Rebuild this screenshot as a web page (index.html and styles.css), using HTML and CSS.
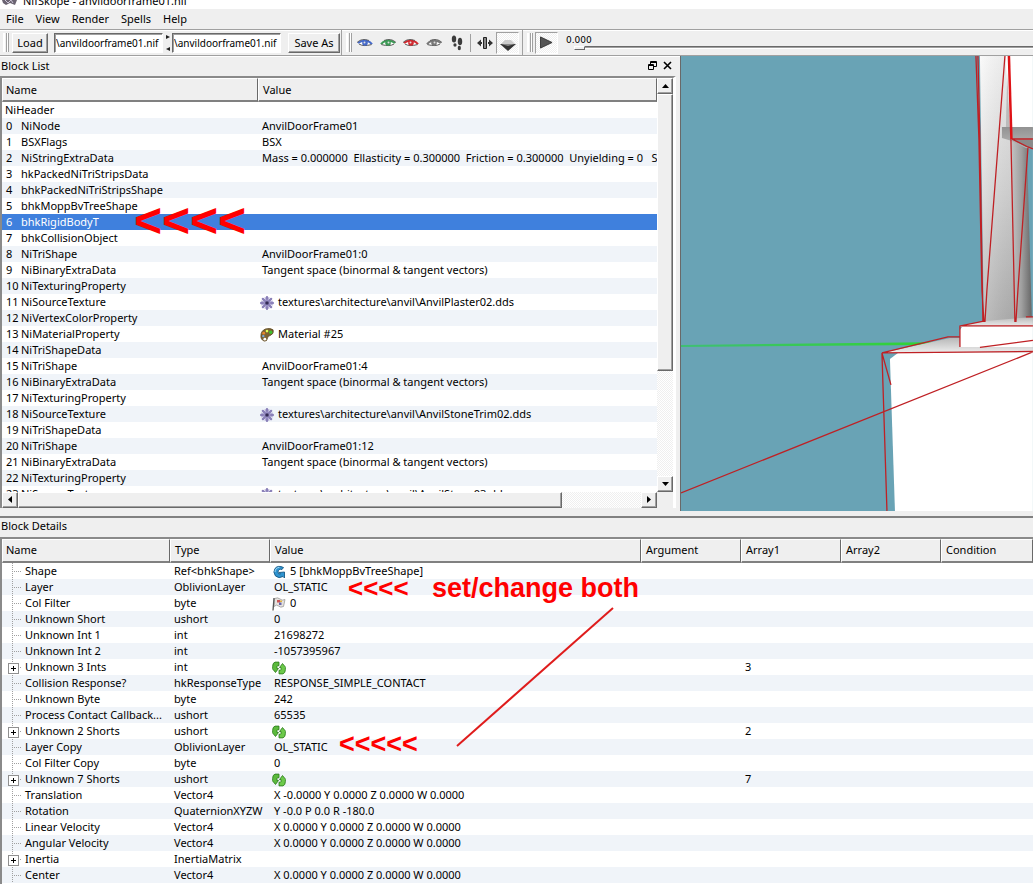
FILE: index.html
```html
<!DOCTYPE html>
<html lang="en">
<head>
<meta charset="utf-8">
<title>NifSkope - anvildoorframe01.nif</title>
<link rel="stylesheet" href="styles.css">
</head>
<body>
<svg class="defs" aria-hidden="true">
  <symbol id="eye" viewBox="0 0 16 12">
    <path d="M0 5.500Q4 1 9 2Q13 3 15.500 7Q10 9.500 5 9Q2.500 8 0 5.500Z" fill="#fff"/>
    <path d="M1 6Q4 3.500 9 3.800Q13 4.500 15 7.200" fill="none" stroke="currentColor" stroke-width="2"/>
    <path d="M2 7Q6 9.800 14.500 7.600" fill="none" stroke="#555" stroke-width="1"/>
    <circle cx="8" cy="6" r="2.800" fill="currentColor"/><circle cx="7.500" cy="5.500" r="1" fill="#ddd"/>
    <path d="M0 5.500Q5 .5 12 3.500" fill="none" stroke="#444" stroke-width=".8"/>
  </symbol>
  <symbol id="flower" viewBox="0 0 14 14">
    <g stroke="#8a80b8" stroke-width="2.400" stroke-linecap="round"><path d="M7 1.200V12.800M1.200 7H12.800M2.900 2.900L11.100 11.100M11.100 2.900L2.900 11.100"/></g>
    <g stroke="#a79fd0" stroke-width=".8"><path d="M5 1L9 13M1 5L13 9M1 9L13 5M9 1L5 13"/></g>
    <circle cx="7" cy="7" r="1.800" fill="#332a55"/>
  </symbol>
  <symbol id="palette" viewBox="0 0 15 15">
    <path d="M1 8Q1 3 6 1Q11-.5 14 2Q15.500 6 11 8Q8 8.500 8 11Q7.500 14.500 4.500 14Q.5 12.500 1 8Z" fill="#7d6332" stroke="#55401c" stroke-width=".8"/>
    <circle cx="4" cy="5.500" r="1.500" fill="#e8862e"/><circle cx="7.500" cy="3.300" r="1.400" fill="#df5"/><circle cx="11.500" cy="4.500" r="1.800" fill="#3fc22e"/><circle cx="3.500" cy="8.700" r="1.300" fill="#76a8e0"/><circle cx="5.200" cy="12" r="1.500" fill="#fff"/>
  </symbol>
  <symbol id="link" viewBox="0 0 14 14">
    <path d="M11.500 2.500L10 4.500Q6.500 3.500 6 7Q6 9.500 8.500 9L7 7.500L12.500 7V13L11 11.500Q7 14 3.500 11Q.5 7 3 3.500Q6-.2 11.500 2.500Z" fill="#2e93d0" stroke="#175985" stroke-width=".9"/>
    <path d="M3 7Q3 3 7.500 2.300" fill="none" stroke="#a3daf5"/>
  </symbol>
  <symbol id="flag" viewBox="0 0 14 14">
    <path d="M2.500 1.500Q6 0 8 2T13 2.500L11.500 9.500Q8.500 11 6.500 9T2 9.500Z" fill="#e6e2de" stroke="#999" stroke-width=".8"/>
    <path d="M2 1L1 13.500" stroke="#555" stroke-width="1.300"/><path d="M5 3H8V5.500H5Z" fill="#c55"/><path d="M7 5.500H9.500V8H7Z" fill="#66a"/><path d="M8 3.500H10V5H8Z" fill="#e2b13a"/>
  </symbol>
  <symbol id="array" viewBox="0 0 14 13">
    <path d="M7 .6H3Q.6 1.500 .6 5V6.500L.2 7L3.500 11L6.500 7H5V5Q5 4.200 7 4.200Z" fill="#5cba3d" stroke="#28791a" stroke-width=".8"/>
    <path d="M7 12.400H11Q13.400 11.500 13.400 8V6.500L13.800 6L10.500 2L7.500 6H9V8Q9 8.800 7 8.800Z" fill="#6cc94a" stroke="#28791a" stroke-width=".8"/>
  </symbol>
</svg>

<header class="titlebar"><svg class="appicon" viewBox="0 0 16 6"><path d="M0 0H15L13 5L8 3L4 5L1 3Z" fill="#6b6472"/><path d="M3 0L6 3L9 0L11 3" fill="none" stroke="#cbc4d6"/></svg><span>NifSkope - anvildoorframe01.nif</span></header>
<nav class="menubar"><a href="#">File</a><a href="#">View</a><a href="#">Render</a><a href="#">Spells</a><a href="#">Help</a></nav>

<div class="toolbar">
  <div class="group files">
    <i class="grip"></i>
    <button class="push">Load</button>
    <input class="path" type="text" aria-label="Load path" value="\anvildoorframe01.nif">
    <svg class="swap" viewBox="0 0 4 16"><path d="M0 0L4 2L0 4ZM4 12L0 14L4 16Z" fill="#222"/></svg>
    <input class="path" type="text" aria-label="Save path" value="\anvildoorframe01.nif">
    <button class="push save">Save As</button>
  </div>
  <div class="group views">
    <i class="grip"></i>
    <button class="tool" aria-label="Top view"><svg class="blue"><use href="#eye"/></svg></button>
    <button class="tool flip" aria-label="Front view"><svg class="green"><use href="#eye"/></svg></button>
    <button class="tool" aria-label="Side view"><svg class="red"><use href="#eye"/></svg></button>
    <button class="tool flip" aria-label="User view"><svg class="gray"><use href="#eye"/></svg></button>
    <button class="tool" aria-label="Walk"><svg class="feet" viewBox="0 0 12 16"><ellipse cx="3" cy="4" rx="2.200" ry="3.600" fill="#3c3c3c"/><ellipse cx="4" cy="10" rx="1.600" ry="1.800" fill="#3c3c3c"/><ellipse cx="9" cy="6.500" rx="2.200" ry="3.800" fill="#3c3c3c"/><ellipse cx="8.300" cy="13" rx="1.600" ry="2.200" fill="#3c3c3c"/></svg></button>
    <i class="rule"></i>
    <button class="tool" aria-label="Flip view"><svg class="mirror" viewBox="0 0 16 12"><path d="M0 6L4 2.500V5H5V7H4V9.500ZM16 6L12 2.500V5H11V7H12V9.500Z" fill="#333"/><path d="M6.500 .5H9.500V11.500H6.500Z" fill="#888" stroke="#222"/></svg></button>
    <button class="tool down" aria-label="Perspective"><svg class="pyramid" viewBox="0 0 16 11"><path d="M1 4L5 0H11L15 4Z" fill="#ccc"/><path d="M0 4H16L8 11Z" fill="#333"/><path d="M1 4H15L8 6Z" fill="#888"/></svg></button>
  </div>
  <div class="group anim">
    <i class="grip"></i>
    <button class="tool down play" aria-label="Play"><svg class="playicon" viewBox="0 0 14 13"><path d="M.5 .5L13 6.500L.5 12.500Z" fill="#555" stroke="#333"/></svg></button>
    <label class="time"><span>0.000</span><input type="range" min="0" max="100" value="0"></label>
  </div>
</div>

<main class="workspace">
  <section class="blocklist">
    <h2 class="docktitle"><span>Block List</span>
      <button aria-label="Float"><svg viewBox="0 0 9 9"><path d="M2.500 3V.5H8.500V5.500H6M2.500 1.500H8.500" fill="none" stroke="#000"/><path d="M.5 3.500H5.500V8.500H.5ZM.5 4.500H5.500" fill="none" stroke="#000"/></svg></button>
      <button aria-label="Close"><svg viewBox="0 0 9 9"><path d="M1 1L8 8M8 1L1 8" stroke="#000" stroke-width="1.600"/></svg></button>
    </h2>
    <div class="frame">
      <div class="view">
        <table class="blocks">
          <colgroup><col class="c-block"><col></colgroup>
          <thead><tr><th>Name</th><th>Value</th></tr></thead>
          <tbody>
            <tr><td>NiHeader</td><td></td></tr>
            <tr><td><b>0</b>NiNode</td><td>AnvilDoorFrame01</td></tr>
            <tr><td><b>1</b>BSXFlags</td><td>BSX</td></tr>
            <tr><td><b>2</b>NiStringExtraData</td><td>Mass = 0.000000  Ellasticity = 0.300000  Friction = 0.300000  Unyielding = 0   S</td></tr>
            <tr><td><b>3</b>hkPackedNiTriStripsData</td><td></td></tr>
            <tr><td><b>4</b>bhkPackedNiTriStripsShape</td><td></td></tr>
            <tr><td><b>5</b>bhkMoppBvTreeShape</td><td></td></tr>
            <tr class="selected"><td><b>6</b>bhkRigidBodyT<span class="note big">&lt;&lt;&lt;&lt;</span></td><td></td></tr>
            <tr><td><b>7</b>bhkCollisionObject</td><td></td></tr>
            <tr><td><b>8</b>NiTriShape</td><td>AnvilDoorFrame01:0</td></tr>
            <tr><td><b>9</b>NiBinaryExtraData</td><td>Tangent space (binormal &amp; tangent vectors)</td></tr>
            <tr><td><b>10</b>NiTexturingProperty</td><td></td></tr>
            <tr><td><b>11</b>NiSourceTexture</td><td><svg class="ico"><use href="#flower"/></svg>textures\architecture\anvil\AnvilPlaster02.dds</td></tr>
            <tr><td><b>12</b>NiVertexColorProperty</td><td></td></tr>
            <tr><td><b>13</b>NiMaterialProperty</td><td><svg class="ico"><use href="#palette"/></svg>Material #25</td></tr>
            <tr><td><b>14</b>NiTriShapeData</td><td></td></tr>
            <tr><td><b>15</b>NiTriShape</td><td>AnvilDoorFrame01:4</td></tr>
            <tr><td><b>16</b>NiBinaryExtraData</td><td>Tangent space (binormal &amp; tangent vectors)</td></tr>
            <tr><td><b>17</b>NiTexturingProperty</td><td></td></tr>
            <tr><td><b>18</b>NiSourceTexture</td><td><svg class="ico"><use href="#flower"/></svg>textures\architecture\anvil\AnvilStoneTrim02.dds</td></tr>
            <tr><td><b>19</b>NiTriShapeData</td><td></td></tr>
            <tr><td><b>20</b>NiTriShape</td><td>AnvilDoorFrame01:12</td></tr>
            <tr><td><b>21</b>NiBinaryExtraData</td><td>Tangent space (binormal &amp; tangent vectors)</td></tr>
            <tr><td><b>22</b>NiTexturingProperty</td><td></td></tr>
            <tr><td><b>23</b>NiSourceTexture</td><td><svg class="ico"><use href="#flower"/></svg>textures\architecture\anvil\AnvilStone03.dds</td></tr>
          </tbody>
        </table>
      </div>
      <div class="vbar">
        <button aria-label="Scroll up"><svg viewBox="0 0 7 4"><path d="M0 4L3.500 0L7 4Z"/></svg></button>
        <i class="thumb"></i><i class="track"></i>
        <button aria-label="Scroll down"><svg viewBox="0 0 7 4"><path d="M0 0H7L3.500 4Z"/></svg></button>
      </div>
      <div class="hbar">
        <button aria-label="Scroll left"><svg class="side" viewBox="0 0 4 7"><path d="M4 0V7L0 3.500Z"/></svg></button>
        <i class="thumb"></i><i class="track"></i>
        <button aria-label="Scroll right"><svg class="side" viewBox="0 0 4 7"><path d="M0 0V7L4 3.500Z"/></svg></button>
      </div>
      <i class="corner"></i>
    </div>
  </section>
  <section class="glview" aria-label="Render view">
    <svg viewBox="681 56 352 455" preserveAspectRatio="xMinYMin slice">
      <defs>
        <linearGradient id="pv" x1="0" y1="0" x2="0" y2="1"><stop offset="0" stop-color="#f8f8f8"/><stop offset=".5" stop-color="#d4d4d4"/><stop offset="1" stop-color="#a8a8a8"/></linearGradient>
        <linearGradient id="ph" x1="0" y1="0" x2="1" y2="0"><stop offset="0" stop-color="#fff" stop-opacity=".3"/><stop offset="1" stop-color="#999" stop-opacity=".15"/></linearGradient>
        <linearGradient id="dk" x1="0" y1="0" x2="1" y2="0"><stop offset="0" stop-color="#c4c4c4"/><stop offset=".5" stop-color="#a0a0a0"/><stop offset="1" stop-color="#666"/></linearGradient>
        <linearGradient id="cap" x1="0" y1="0" x2="0" y2="1"><stop offset="0" stop-color="#929292"/><stop offset="1" stop-color="#b8b8b8"/></linearGradient>
        <linearGradient id="top" x1="0" y1="0" x2="0" y2="1"><stop offset="0" stop-color="#b8b8b8"/><stop offset="1" stop-color="#eee"/></linearGradient>
        <linearGradient id="axis" x1="0" y1="0" x2="1" y2="0"><stop offset="0" stop-color="#3fbf74"/><stop offset="1" stop-color="#2fd52f"/></linearGradient>
      </defs>
      <path d="M681 56H1033V511H681Z" fill="#69a3b5"/>
      <path d="M681 345L948 342L930 345L681 347Z" fill="url(#axis)"/>
      <path d="M980 56H1012V142L1016 323H984Z" fill="url(#pv)"/><path d="M980 56H1012V142L1016 323H984Z" fill="url(#ph)"/>
      <path d="M1006 56H1033V128H1007Z" fill="#fff"/>
      <path d="M1007 70L1010 128H1006Z" fill="#bbb"/>
      <path d="M1011 139L1027 148L1032 322H1015Z" fill="url(#dk)"/>
      <path d="M1002 127H1033V149L1026 148L1012 141L1002 138Z" fill="url(#cap)"/>
      <path d="M1013 140H1033V149L1026 147Z" fill="#8a8a8a"/>
      <path d="M960 326L985 321L1033 317V327H960Z" fill="url(#top)"/>
      <path d="M882 353L950 338H960V347H1033V353Z" fill="url(#top)"/>
      <path d="M962 327H1033V347H960V330Z" fill="#fff"/>
      <path d="M890 359L898 353H1033V511H895Z" fill="#fff"/>
      <g fill="none" stroke="#bf2024" stroke-width="1.300">
        <path d="M976 56L979 140L982 290L984 322M978 56L980 140L983 322M1005 56L987 290L985 322M1011 139L1015 322M1028 148L1018 290L1016 322"/>
        <path d="M1012 139H1033M1012 139L1028 147L1033 149M960 347V326L985 321M960 326H1033M1026 317H1033M980 347.500L1033 340.500"/>
        <path d="M960 337H948L882 353L1033 351.500M882 353L887 511M882 353L891 385M681 493L1033 352"/>
      </g>
      <path d="M1009 56L1011.500 139" stroke="#df1216" stroke-width="2.500"/>
    </svg>
  </section>
</main>

<section class="details">
  <h2 class="docktitle"><span>Block Details</span></h2>
  <div class="frame">
    <div class="view">
      <table class="fields">
        <colgroup><col class="c-name"><col class="c-type"><col class="c-value"><col class="c-arg"><col class="c-arg"><col class="c-arg"><col></colgroup>
        <thead><tr><th>Name</th><th>Type</th><th>Value</th><th>Argument</th><th>Array1</th><th>Array2</th><th>Condition</th></tr></thead>
        <tbody>
          <tr><td><i class="branch"></i>Shape</td><td>Ref&lt;bhkShape&gt;</td><td><svg class="ico"><use href="#link"/></svg>5 [bhkMoppBvTreeShape]</td><td></td><td></td><td></td><td></td></tr>
          <tr><td><i class="branch"></i>Layer</td><td>OblivionLayer</td><td>OL_STATIC<span class="note first">&lt;&lt;&lt;&lt;</span><span class="note caption">set/change both</span></td><td></td><td></td><td></td><td></td></tr>
          <tr><td><i class="branch"></i>Col Filter</td><td>byte</td><td><svg class="ico"><use href="#flag"/></svg>0<svg class="pointer" viewBox="0 0 160 142"><path d="M158 2L2 140" stroke="#df1c1c" stroke-width="2"/></svg></td><td></td><td></td><td></td><td></td></tr>
          <tr><td><i class="branch"></i>Unknown Short</td><td>ushort</td><td>0</td><td></td><td></td><td></td><td></td></tr>
          <tr><td><i class="branch"></i>Unknown Int 1</td><td>int</td><td>21698272</td><td></td><td></td><td></td><td></td></tr>
          <tr><td><i class="branch"></i>Unknown Int 2</td><td>int</td><td>-1057395967</td><td></td><td></td><td></td><td></td></tr>
          <tr><td><i class="branch plus"></i>Unknown 3 Ints</td><td>int</td><td><svg class="ico"><use href="#array"/></svg></td><td></td><td>3</td><td></td><td></td></tr>
          <tr><td><i class="branch"></i>Collision Response?</td><td>hkResponseType</td><td>RESPONSE_SIMPLE_CONTACT</td><td></td><td></td><td></td><td></td></tr>
          <tr><td><i class="branch"></i>Unknown Byte</td><td>byte</td><td>242</td><td></td><td></td><td></td><td></td></tr>
          <tr><td><i class="branch"></i>Process Contact Callback...</td><td>ushort</td><td>65535</td><td></td><td></td><td></td><td></td></tr>
          <tr><td><i class="branch plus"></i>Unknown 2 Shorts</td><td>ushort</td><td><svg class="ico"><use href="#array"/></svg></td><td></td><td>2</td><td></td><td></td></tr>
          <tr><td><i class="branch"></i>Layer Copy</td><td>OblivionLayer</td><td>OL_STATIC<span class="note second">&lt;&lt;&lt;&lt;&lt;</span></td><td></td><td></td><td></td><td></td></tr>
          <tr><td><i class="branch"></i>Col Filter Copy</td><td>byte</td><td>0</td><td></td><td></td><td></td><td></td></tr>
          <tr><td><i class="branch plus"></i>Unknown 7 Shorts</td><td>ushort</td><td><svg class="ico"><use href="#array"/></svg></td><td></td><td>7</td><td></td><td></td></tr>
          <tr><td><i class="branch"></i>Translation</td><td>Vector4</td><td>X -0.0000 Y 0.0000 Z 0.0000 W 0.0000</td><td></td><td></td><td></td><td></td></tr>
          <tr><td><i class="branch"></i>Rotation</td><td>QuaternionXYZW</td><td>Y -0.0 P 0.0 R -180.0</td><td></td><td></td><td></td><td></td></tr>
          <tr><td><i class="branch"></i>Linear Velocity</td><td>Vector4</td><td>X 0.0000 Y 0.0000 Z 0.0000 W 0.0000</td><td></td><td></td><td></td><td></td></tr>
          <tr><td><i class="branch"></i>Angular Velocity</td><td>Vector4</td><td>X 0.0000 Y 0.0000 Z 0.0000 W 0.0000</td><td></td><td></td><td></td><td></td></tr>
          <tr><td><i class="branch plus"></i>Inertia</td><td>InertiaMatrix</td><td></td><td></td><td></td><td></td><td></td></tr>
          <tr><td><i class="branch"></i>Center</td><td>Vector4</td><td>X 0.0000 Y 0.0000 Z 0.0000 W 0.0000</td><td></td><td></td><td></td><td></td></tr>
        </tbody>
      </table>
    </div>
  </div>
</section>
</body>
</html>
```
FILE: styles.css
```css
* { box-sizing: border-box; }
html, body { height: 100%; }
body {
  margin: 0;
  display: flex;
  flex-direction: column;
  overflow: hidden;
  background: #efefef;
  color: #000;
  font: 11px/16px "Noto Sans", "Open Sans", sans-serif;
}
button, input { font: inherit; color: inherit; margin: 0; }
button { display: flex; align-items: center; justify-content: center; padding: 0; border: 0; background: none; }
svg { display: block; flex: none; }
i { display: block; flex: none; }
.defs { position: absolute; width: 0; height: 0; }

.titlebar { display: flex; align-items: flex-end; flex: none; gap: 5px; height: 9px; padding-left: 2px; overflow: hidden; background: #fff; }
.appicon { width: 16px; height: 6px; align-self: flex-start; }
.menubar { display: flex; flex: none; gap: 12px; height: 20px; padding: 2px 6px; }
.menubar a { color: inherit; text-decoration: none; }

.toolbar { display: flex; flex: none; height: 27px; border-top: 1px solid #a0a0a0; border-bottom: 1px solid #a0a0a0; box-shadow: inset 0 1px #fff; }
.group { display: flex; align-items: center; flex: none; padding: 1px 4px; border-right: 1px solid #a0a0a0; }
.files { width: 342px; padding: 1px 0 1px 3px; }
.views { width: 181px; }
.anim { flex: 1; min-width: 0; border: 0; padding-right: 0; }
.grip { width: 6px; height: 19px; border: solid #a0a0a0; border-width: 0 1px; background: linear-gradient(90deg, #fff 1px, #efefef 1px, #efefef 2px, #a0a0a0 2px, #a0a0a0 3px, #fff 3px); border-left-color: #fff; }
.push { flex: none; width: 36px; height: 20px; margin-left: 3px; border: 1px solid; border-color: #fff #696969 #696969 #fff; box-shadow: inset -1px -1px #a0a0a0; }
.push.save { width: 52px; margin-left: 7px; }
.path { flex: none; width: 109px; height: 20px; padding: 0 1px; margin-left: 6px; border: 1px solid; border-color: #696969 #fff #fff #696969; background: #fff; font-size: 10px; box-shadow: inset 1px 1px #a0a0a0; }
.swap { width: 4px; height: 16px; margin-left: 3px; }
.swap + .path { margin-left: 2px; }
.tool { width: 23px; height: 22px; flex: none; }
.tool svg { width: 16px; height: 12px; }
.flip svg { transform: scaleX(-1); }
.blue { color: #4569c8; } .green { color: #3c9a55; } .red { color: #d02a30; } .gray { color: #777; }
.tool svg.feet { width: 12px; height: 16px; }
.rule { width: 1px; height: 18px; margin: 0 2px; background: #a0a0a0; }
.views .grip { margin-right: 1px; }
.tool.down { border: 1px solid; border-color: #a0a0a0 #fff #fff #a0a0a0; background: repeating-conic-gradient(#fff 0 25%, #efefef 0 50%) 0 0 / 2px 2px; }
.tool svg.pyramid { width: 16px; height: 11px; margin-top: 6px; }
.tool svg.playicon { width: 13px; height: 13px; }
.play { margin-left: 2px; }
.time { display: flex; flex-direction: column; flex: 1; min-width: 0; margin-left: 8px; font: 9px/10px "DejaVu Sans", sans-serif; }
.time input { appearance: none; height: 6px; margin-left: 8px; background: linear-gradient(#0000 1px, #696969 1px, #696969 2px, #a0a0a0 2px, #a0a0a0 3px, #fff 3px, #fff 4px, #0000 4px); }
.time input::-webkit-slider-thumb { appearance: none; width: 11px; height: 4px; border: 1px solid; border-color: #fff #696969 #696969 #fff; background: #efefef; }

.workspace { display: flex; flex: 461 1 0; min-height: 0; }
.blocklist { display: flex; flex-direction: column; flex: 681 1 0; min-width: 0; border-top: 1px solid #fff; }
.docktitle { display: flex; align-items: center; flex: none; height: 19px; margin: 0; padding: 0 2px 2px 1px; gap: 6px; font-size: 11px; font-weight: 400; }
.docktitle span { flex: 1; }
.docktitle button, .docktitle svg { width: 9px; height: 9px; }
.frame { flex: 1; min-height: 0; border: solid; border-width: 2px 0 0 2px; border-color: #8a8a8a #fff #fff #8a8a8a; background: #fff; }
.blocklist .docktitle { margin-right: 6px; }
.blocklist .frame { display: grid; grid-template: minmax(0, 1fr) 16px / minmax(0, 1fr) 16px; flex: none; height: calc(100% - 27px); margin-right: 4px; border-right-width: 3px; }
.corner { background: #efefef; }
.view { min-width: 0; min-height: 0; overflow: hidden; background: #fff; }

table { width: 100%; border-collapse: separate; border-spacing: 0; table-layout: fixed; }
th { height: 24px; padding: 0 4px; text-align: left; font-weight: 400; background: #efefef; border: solid; border-width: 1px 1px 2px 1px; border-color: #fff #696969 #808080 #fff; }
th:first-child { padding-left: 3px; }
td { height: 16px; padding: 0 0 0 4px; white-space: pre; overflow: hidden; line-height: 16px; }
tbody tr:nth-child(even) { background: #f0f4f9; }
tbody tr.selected { background: #3f80dd; color: #fff; }
td:first-child { padding-left: 3px; }
td b { display: inline-block; width: 16px; padding-left: 1px; font-weight: 400; }
.selected td:first-child { position: relative; overflow: visible; }
.c-block { width: 256px; }
.c-name { width: 168px; } .c-type { width: 100px; } .c-value { width: 371px; } .c-arg { width: 100px; }
.fields td:nth-child(3) { position: relative; overflow: visible; }
.fields td:first-child { padding-left: 0; }
.ico { display: inline-block; width: 14px; height: 14px; margin: 0 4px 0 -2px; vertical-align: middle; }

.branch { display: inline-block; width: 23px; height: 16px; vertical-align: top; background: repeating-linear-gradient(#a0a0a0 0 1px, #0000 1px 2px) 10px 0 / 1px 16px no-repeat, repeating-linear-gradient(90deg, #a0a0a0 0 1px, #0000 1px 2px) 10px 8px / 10px 1px no-repeat; }
.plus { position: relative; }
.plus::before { content: ""; position: absolute; left: 6px; top: 4px; width: 9px; height: 9px; border: 1px solid #909090; background: linear-gradient(#000, #000) center / 5px 1px no-repeat, linear-gradient(#000, #000) center / 1px 5px no-repeat, #fff; }

.vbar, .hbar { display: flex; min-width: 0; background: #efefef; }
.vbar { flex-direction: column; }
.hbar { grid-row: 2; grid-column: 1; }
.vbar button, .hbar button, .thumb { flex: none; min-width: 16px; min-height: 16px; border: 1px solid; border-color: #fff #696969 #696969 #fff; background: #efefef; box-shadow: inset -1px -1px #a0a0a0; }
.track { flex: 1; background: repeating-conic-gradient(#fff 0 25%, #efefef 0 50%) 0 0 / 2px 2px; }
.vbar .thumb { height: 67%; }
.hbar .thumb { width: 83%; }
.vbar svg { width: 7px; height: 4px; }
.hbar svg { width: 4px; height: 7px; }

.glview { flex: 352 1 0; min-width: 0; margin-bottom: 5px; border-left: 1px solid #696969; }
.glview svg { width: 100%; height: 100%; }

.details { display: flex; flex-direction: column; flex: 367 1 0; min-height: 0; border-top: 2px solid #808080; }

.note { position: absolute; z-index: 2; color: #f00; font-family: "Liberation Sans", Arial, sans-serif; font-weight: 700; line-height: 1; white-space: pre; }
.note.big { left: 132px; top: -17px; font-size: 48px; }
.note.first { left: 78px; top: -4px; font-size: 26px; }
.note.second { left: 69px; top: -8px; font-size: 27px; }
.note.caption { left: 162px; top: -4px; font-size: 27px; }
.pointer { position: absolute; z-index: 2; left: 185px; top: 11px; width: 160px; height: 142px; }
```
